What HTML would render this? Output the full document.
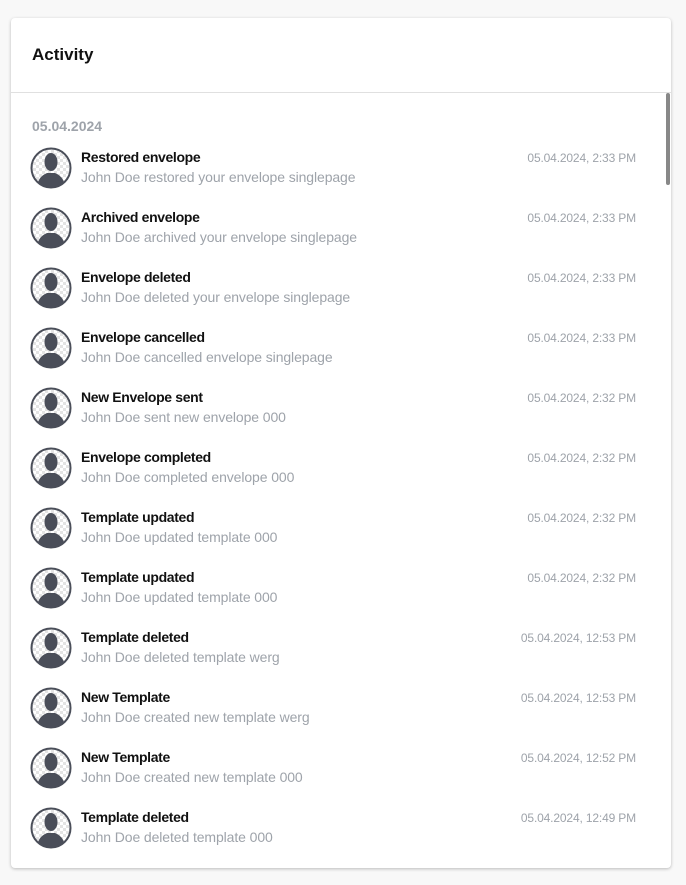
<!DOCTYPE html>
<html><head><meta charset="utf-8"><style>
*{box-sizing:border-box;margin:0;padding:0}
body{width:686px;height:885px;background:#f8f8f8;font-family:"Liberation Sans",Arial,sans-serif;position:relative;overflow:hidden}
.card{position:absolute;left:11px;top:18px;width:660px;height:850px;background:#fff;border-radius:4px;box-shadow:0 1px 3px rgba(0,0,0,.25);overflow:hidden}
.hdr{height:75px;border-bottom:1px solid #e0e0e0;padding:27px 0 0 21px;font-size:17px;font-weight:bold;color:#111}
.sb{position:absolute;left:655px;top:75px;width:4px;height:92px;background:#888;border-radius:2px}
.date{position:absolute;left:21px;top:100px;font-size:14px;font-weight:bold;color:#9ea3aa}
.row{position:absolute;left:19px;width:610px;height:44px}
.av{position:absolute;left:0;top:0;width:42px;height:42px}
.t{position:absolute;left:51px;top:2px;font-size:14px;color:#111;font-weight:bold;letter-spacing:-.35px}
.s{position:absolute;left:51px;top:22px;font-size:14px;color:#9ea3aa;letter-spacing:-.1px}
.d{position:absolute;right:4px;top:4px;font-size:12px;color:#9ea3aa;letter-spacing:-.15px}
</style></head><body>
<div class="card">
<div class="hdr">Activity</div>
<div class="sb"></div>
<div class="date">05.04.2024</div>
<svg width="0" height="0" style="position:absolute"><defs>
<pattern id="ck" width="6" height="6" patternUnits="userSpaceOnUse"><rect width="6" height="6" fill="#fff"/><rect width="3" height="3" fill="#e4e4e4"/><rect x="3" y="3" width="3" height="3" fill="#e4e4e4"/></pattern>
<clipPath id="cc"><circle cx="21" cy="21" r="19"/></clipPath>
<g id="avatar"><circle cx="21" cy="21" r="19" fill="url(#ck)"/><g clip-path="url(#cc)" fill="#4a4e59"><ellipse cx="21" cy="15" rx="6.5" ry="9"/><path d="M7 42 C7 31 13 28 17 26 L25 26 C29 28 35 31 35 42 Z"/></g><circle cx="21" cy="21" r="19.5" fill="none" stroke="#4a4e59" stroke-width="2"/></g>
</defs></svg>
<div id="rows"></div>
</div>
<script>
var d=[["Restored envelope","John Doe restored your envelope singlepage","2:33 PM"],["Archived envelope","John Doe archived your envelope singlepage","2:33 PM"],["Envelope deleted","John Doe deleted your envelope singlepage","2:33 PM"],["Envelope cancelled","John Doe cancelled envelope singlepage","2:33 PM"],["New Envelope sent","John Doe sent new envelope 000","2:32 PM"],["Envelope completed","John Doe completed envelope 000","2:32 PM"],["Template updated","John Doe updated template 000","2:32 PM"],["Template updated","John Doe updated template 000","2:32 PM"],["Template deleted","John Doe deleted template werg","12:53 PM"],["New Template","John Doe created new template werg","12:53 PM"],["New Template","John Doe created new template 000","12:52 PM"],["Template deleted","John Doe deleted template 000","12:49 PM"]];
var h="";d.forEach(function(r,i){h+='<div class="row" style="top:'+(129+60*i)+'px"><svg class="av" viewBox="0 0 42 42"><use href="#avatar"/></svg><div class="t">'+r[0]+'</div><div class="s">'+r[1]+'</div><div class="d">05.04.2024, '+r[2]+'</div></div>';});
document.getElementById("rows").innerHTML=h;
</script>
</body></html>
